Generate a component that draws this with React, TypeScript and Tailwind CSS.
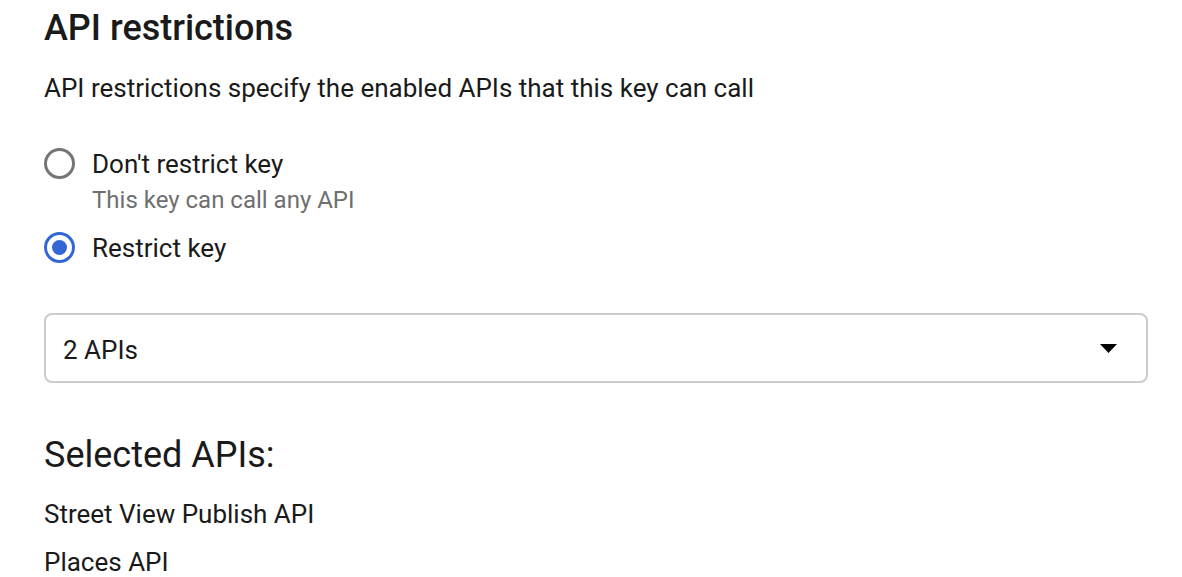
export default function App() {
  return (
    <div className="min-h-[577px] bg-white pl-[44px] pr-[34px] pt-[6px] text-[#1a1a1a]" style={{ fontFamily: "Roboto, 'Noto Sans', sans-serif" }}>
      <h1 className="text-[36px] leading-[44px] font-medium text-[#1a1a1a]">API restrictions</h1>
      <p className="mt-[20px] text-[26px] leading-[36px] text-[#1a1a1a]">API restrictions specify the enabled APIs that this key can call</p>

      <div className="mt-[40px] flex flex-col">
        <label className="flex items-start gap-[17px]">
          <span className="mt-[2px] flex h-[31px] w-[31px] shrink-0 items-center justify-center rounded-full border-[3px] border-[#757575]" />
          <span className="flex flex-col">
            <span className="text-[26px] leading-[36px] text-[#1a1a1a]">Don't restrict key</span>
            <span className="mt-[2px] text-[24px] leading-[32px] text-[#6f6f6f]">This key can call any API</span>
          </span>
        </label>
        <label className="mt-[14px] flex items-start gap-[17px]">
          <span className="mt-[2px] flex h-[31px] w-[31px] shrink-0 items-center justify-center rounded-full border-[3px] border-[#3367d6]">
            <span className="h-[15px] w-[15px] rounded-full bg-[#3367d6]" />
          </span>
          <span className="text-[26px] leading-[36px] text-[#1a1a1a]">Restrict key</span>
        </label>
      </div>

      <div className="mt-[47px] flex h-[70px] items-center justify-between rounded-[8px] border-2 border-[#cccccc] pl-[17px] pr-[29px]">
        <span className="mt-[3px] text-[26px] leading-[34px] text-[#1a1a1a]">2 APIs</span>
        <svg width="17" height="9" viewBox="0 0 17 9">
          <path d="M0 0 L17 0 L8.5 9 Z" fill="#000" />
        </svg>
      </div>

      <h2 className="mt-[50px] text-[36px] leading-[44px] font-normal text-[#1a1a1a]">Selected APIs:</h2>
      <ul className="mt-[19px] flex flex-col gap-[12px] text-[#1a1a1a]">
        <li className="text-[26px] leading-[36px]">Street View Publish API</li>
        <li className="text-[26px] leading-[36px]">Places API</li>
      </ul>
    </div>
  );
}
